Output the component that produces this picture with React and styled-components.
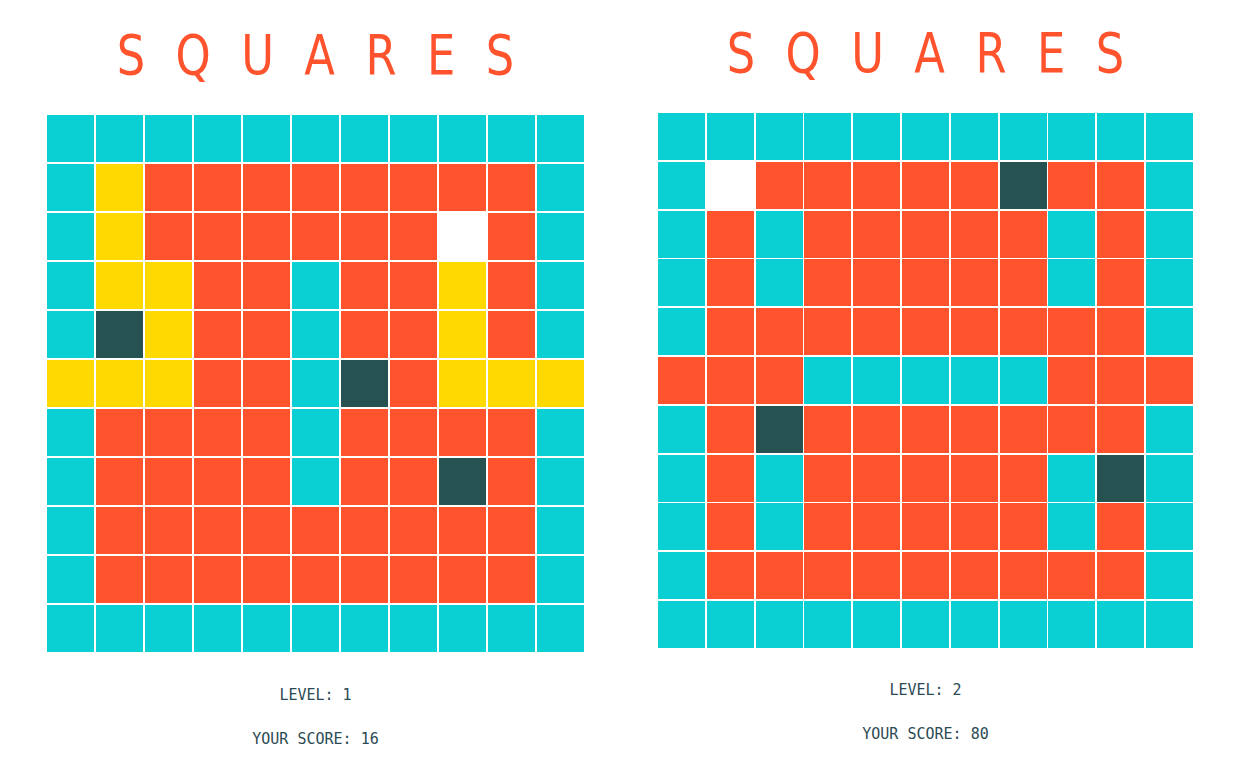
import React from "react";
import styled, { createGlobalStyle } from "styled-components";

const Global = createGlobalStyle`
  html, body { margin: 0; padding: 0; background: #ffffff; }
  body { width: 1236px; height: 772px; overflow: hidden; }
`;

const COLORS = {
  C: "#0AD0D4",
  R: "#FF532E",
  Y: "#FFD900",
  D: "#265352",
  W: "#FFFFFF",
};

const LEVEL1 = [
  "CCCCCCCCCCC",
  "CYRRRRRRRRC",
  "CYRRRRRRWRC",
  "CYYRRCRRYRC",
  "CDYRRCRRYRC",
  "YYYRRCDRYYY",
  "CRRRRCRRRRC",
  "CRRRRCRRDRC",
  "CRRRRRRRRRC",
  "CRRRRRRRRRC",
  "CCCCCCCCCCC",
];

const LEVEL2 = [
  "CCCCCCCCCCC",
  "CWRRRRRDRRC",
  "CRCRRRRRCRC",
  "CRCRRRRRCRC",
  "CRRRRRRRRRC",
  "RRRCCCCCRRR",
  "CRDRRRRRRRC",
  "CRCRRRRRCDC",
  "CRCRRRRRCRC",
  "CRRRRRRRRRC",
  "CCCCCCCCCCC",
];

const Page = styled.main`
  display: flex;
  align-items: flex-start;
  gap: 74px;
  padding-left: 47px;
`;

const Panel = styled.section`
  flex: 0 0 auto;
  width: ${(p) => p.$width}px;
  display: flex;
  flex-direction: column;
  align-items: center;
  margin-top: ${(p) => p.$offset}px;
`;

const TitleBox = styled.div`
  width: 100%;
  height: 114px;
  box-sizing: border-box;
  padding-top: 22px;
  display: flex;
  justify-content: center;
`;

const Title = styled.h1`
  flex: 0 0 auto;
  margin: 0;
  padding-left: 38px;
  font-family: "Liberation Sans Narrow", "DejaVu Sans", sans-serif;
  font-weight: 400;
  font-size: 56px;
  line-height: 64px;
  letter-spacing: 38px;
  color: #FF532E;
  transform: scaleX(0.8);
  transform-origin: center;
  white-space: nowrap;
`;

const Board = styled.div`
  display: grid;
  grid-template-columns: repeat(11, ${(p) => p.$cell}px);
  grid-auto-rows: ${(p) => p.$cell}px;
  gap: ${(p) => p.$gap}px;
  background: #ffffff;
`;

const Cell = styled.div`
  background: ${(p) => COLORS[p.$kind]};
`;

const Stats = styled.div`
  display: flex;
  flex-direction: column;
  align-items: center;
  gap: 26px;
  padding-top: ${(p) => p.$top}px;
  font-family: "DejaVu Sans Mono", "Liberation Mono", monospace;
  font-size: 15px;
  line-height: 18px;
  color: #2C4A54;
`;

const Stat = styled.div`
  white-space: pre;
`;

function Game({ rows, level, score, cell, gap, offset, statsTop }) {
  const width = cell * 11 + gap * 10;
  return (
    <Panel $offset={offset} $width={width}>
      <TitleBox>
        <Title>SQUARES</Title>
      </TitleBox>
      <Board $cell={cell} $gap={gap}>
        {rows.flatMap((row, r) =>
          row.split("").map((k, c) => <Cell key={`${r}-${c}`} $kind={k} />)
        )}
      </Board>
      <Stats $top={statsTop}>
        <Stat>LEVEL: {level}</Stat>
        <Stat>YOUR SCORE: {score}</Stat>
      </Stats>
    </Panel>
  );
}

export default function App() {
  return (
    <>
      <Global />
      <Page>
        <Game rows={LEVEL1} level={1} score={16} cell={47} gap={2} offset={1} statsTop={34} />
        <Game rows={LEVEL2} level={2} score={80} cell={47} gap={1.8} offset={-1} statsTop={33} />
      </Page>
    </>
  );
}
